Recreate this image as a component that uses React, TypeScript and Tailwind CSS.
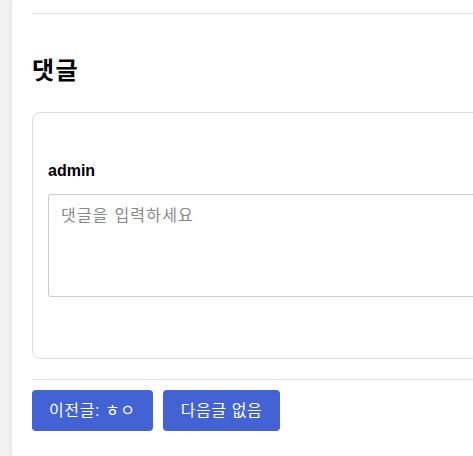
export default function App() {
  return (
    <div
      className="flex h-[456px] w-screen overflow-hidden bg-[#f2f2f2]"
      style={{ fontFamily: '"Liberation Sans", "Noto Sans CJK KR", sans-serif' }}
    >
      <div className="ml-[12px] w-[800px] shrink-0 bg-white px-5 pt-[13px] shadow-[-2px_0_4px_rgba(0,0,0,0.06)]">
        <div className="border-t border-[#dddddd]" />

        <h2 className="mt-[39px] text-[24px] font-bold leading-[36px] tracking-[1.5px] text-black">댓글</h2>

        <div className="mt-[23px] rounded-lg border border-[#dddddd] px-[15px] pb-[61px] pt-[46px]">
          <div className="text-[16px] font-bold leading-6 text-black">admin</div>
          <textarea
            placeholder="댓글을 입력하세요"
            className="mt-[11px] block h-[103px] w-full resize-none rounded-[3px] border border-[#cccccc] px-3 py-[9px] text-[16px] leading-6 tracking-[1.2px] text-black placeholder:text-[#888888] focus:outline-none"
          />
        </div>

        <div className="mt-5 border-t border-[#dddddd]" />

        <div className="mt-[10px] flex gap-[10px]">
          <button className="h-[41px] rounded-[4px] bg-[#4362d3] px-[17px] text-[16px] tracking-[0.6px] text-white">
            이전글: ㅎㅇ
          </button>
          <button className="h-[41px] rounded-[4px] bg-[#4362d3] px-[18px] text-[16px] tracking-[0.6px] text-white">
            다음글 없음
          </button>
        </div>
      </div>
    </div>
  );
}
